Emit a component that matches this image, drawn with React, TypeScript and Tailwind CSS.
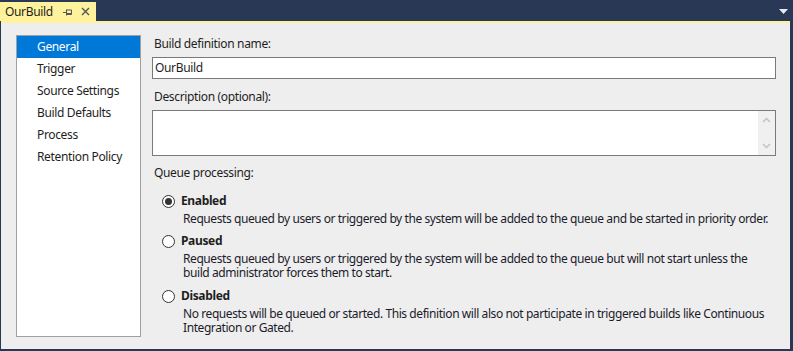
import React from 'react';

const font = { fontFamily: '"Noto Sans", "Open Sans", sans-serif' };

const navItems = ['General', 'Trigger', 'Source Settings', 'Build Defaults', 'Process', 'Retention Policy'];

const options = [
  {
    label: 'Enabled',
    checked: true,
    lines: ['Requests queued by users or triggered by the system will be added to the queue and be started in priority order.'],
  },
  {
    label: 'Paused',
    checked: false,
    lines: [
      'Requests queued by users or triggered by the system will be added to the queue but will not start unless the',
      'build administrator forces them to start.',
    ],
  },
  {
    label: 'Disabled',
    checked: false,
    lines: [
      'No requests will be queued or started. This definition will also not participate in triggered builds like Continuous',
      'Integration or Gated.',
    ],
  },
];

const Radio = ({ checked }: { checked: boolean }) => (
  <svg width="13" height="13" viewBox="0 0 13 13" className="shrink-0">
    <circle cx="6.5" cy="6.5" r="6" fill="#ffffff" stroke="#333333" strokeWidth="1" />
    {checked && <circle cx="6.5" cy="6.5" r="3.5" fill="#333333" />}
  </svg>
);

export default function App() {
  return (
    <div className="w-[793px] h-[351px] bg-[#293955] flex flex-col pl-px pr-[3px] pb-[2px] text-[12px] tracking-[-0.35px] text-[#1e1e1e]" style={font}>
      {/* tab strip */}
      <div className="h-[21px] flex items-end justify-between -ml-px">
        <div className="h-[19px] w-[96px] bg-[#fff29d] flex items-center pl-[5px] text-[12px] text-[#1e1e1e]">
          <span className="leading-none w-[50px]">OurBuild</span>
          <svg width="10" height="8" viewBox="0 0 10 8" className="ml-[8px]">
            <path d="M0 4.5H3.5M3.5 1.5V7.5M3.5 2H8.5V6.5H3.5M3.5 5.5H8.5" stroke="#555" strokeWidth="1" fill="none" />
          </svg>
          <svg width="9" height="9" viewBox="0 0 9 9" className="ml-[8px]">
            <path d="M1 1L8 8M8 1L1 8" stroke="#555" strokeWidth="1.4" />
          </svg>
        </div>
        <svg width="9" height="5" viewBox="0 0 9 5" className="mb-[7px] mr-[2px]">
          <path d="M0 0H9L4.5 5Z" fill="#e8eaef" />
        </svg>
      </div>
      <div className="h-[2px] bg-[#fff29d]" />

      {/* body */}
      <div className="flex-1 bg-[#eeeeee] flex pl-[15px] pt-[12px] pb-[12px] pr-[14px] gap-[11px]">
        <div className="w-[125px] shrink-0 bg-white border border-[#a0a0a0]">
          {navItems.map((item, i) => (
            <div
              key={item}
              className={`h-[22px] flex items-center pl-[20px] whitespace-nowrap ${i === 0 ? 'bg-[#0078d7] text-white' : 'text-[#1e1e1e]'}`}
            >
              {item}
            </div>
          ))}
        </div>

        <div className="flex-1 flex flex-col min-w-0">
          <div className="mt-px h-[16px] leading-[16px] pl-[2px]">Build definition name:</div>
          <div className="mt-[5px] h-[22px] bg-white border border-[#7a7a7a] flex items-center pl-[2px]">OurBuild</div>
          <div className="mt-[10px] h-[16px] leading-[16px] pl-[2px]">Description (optional):</div>
          <div className="mt-[5px] h-[46px] bg-white border border-[#7a7a7a] flex justify-end">
            <div className="w-[17px] bg-[#f0f0f0] flex flex-col items-center justify-between py-[6px]">
              <svg width="9" height="6" viewBox="0 0 9 6">
                <path d="M1 5L4.5 1.5L8 5" stroke="#c2c2c2" strokeWidth="1.5" fill="none" />
              </svg>
              <svg width="9" height="6" viewBox="0 0 9 6">
                <path d="M1 1L4.5 4.5L8 1" stroke="#c2c2c2" strokeWidth="1.5" fill="none" />
              </svg>
            </div>
          </div>
          <div className="mt-[9px] h-[16px] leading-[16px] pl-[2px]">Queue processing:</div>

          <div className="flex flex-col pl-[10px]">
            {options.map((opt, i) => (
              <div key={opt.label} className={i === 0 ? 'mt-[12px]' : i === 1 ? 'mt-[7px]' : 'mt-[8px]'}>
                <div className="flex items-center gap-[6px] h-[16px]">
                  <Radio checked={opt.checked} />
                  <span className="font-bold leading-[16px]">{opt.label}</span>
                </div>
                <div className="mt-[3px] pl-[21px] leading-[14px] tracking-[-0.42px] text-[#1b1b2b]">
                  {opt.lines.map((l) => (
                    <div key={l} className="whitespace-nowrap">{l}</div>
                  ))}
                </div>
              </div>
            ))}
          </div>
        </div>
      </div>
    </div>
  );
}
